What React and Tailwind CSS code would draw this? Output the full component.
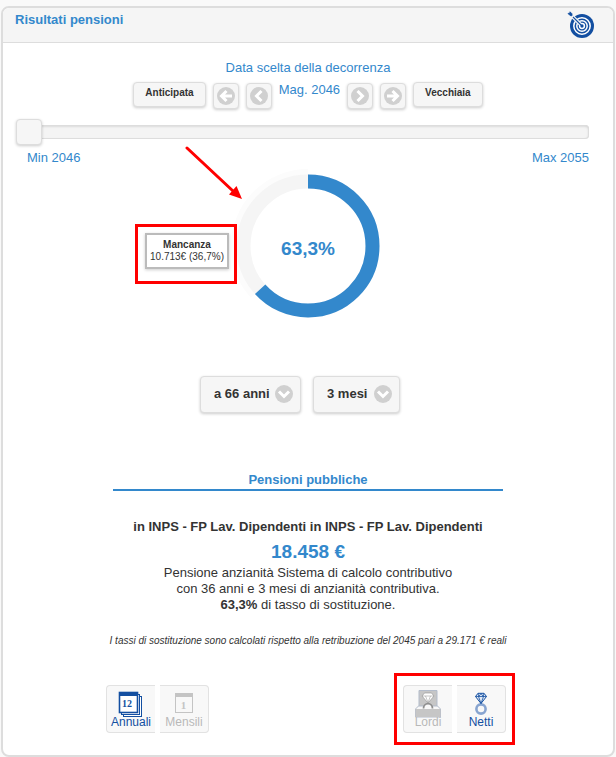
import { useState } from 'react';

const ArrowGlyph = ({ path }) => (
  <svg viewBox="0 0 18 18" className="size-[18px]" aria-hidden="true">
    <circle cx="9" cy="9" r="9" fill="#d0d0d0" />
    <path d={path} fill="none" stroke="#fff" strokeWidth="3" />
  </svg>
);

const TargetIcon = () => (
  <svg viewBox="0 0 28 28" className="size-7" aria-hidden="true">
    <circle cx="15" cy="15" r="12" fill="#134fa1" />
    <g fill="none" stroke="#fff" strokeWidth="1.5">
      <circle cx="15" cy="15" r="8.2" />
      <circle cx="15" cy="15" r="5.2" />
      <circle cx="15" cy="15" r="2.4" />
    </g>
    <path d="M5 5l8 8" stroke="#f5f5f5" strokeWidth="3.6" />
    <path d="M6 6l9 9" stroke="#134fa1" strokeWidth="1.1" />
    <path d="M1 2.500l2-.5V.8l2 2v2L3 4.500z" fill="#134fa1" stroke="#134fa1" strokeWidth=".8" />
  </svg>
);

const YearIcon = () => (
  <svg viewBox="0 0 26 27" className="-mb-0.5 h-[27px] w-[26px]" aria-hidden="true">
    <g fill="#fff" stroke="#134fa1">
      <rect x="5.5" y="5.5" width="18" height="20" />
      <rect x="3.5" y="3.5" width="18" height="20" />
      <rect x="1.5" y="1.5" width="18" height="20" strokeWidth="1.6" />
    </g>
    <path d="M1 1h19v4H1z" fill="#134fa1" />
    <text x="9" y="16" textAnchor="middle" fontSize="10" fontFamily="Liberation Serif, serif" fontWeight="bold" fill="#134fa1">12</text>
  </svg>
);

const MonthIcon = () => (
  <svg viewBox="0 0 20 22" className="mb-0.5 h-[22px] w-5" aria-hidden="true">
    <rect x="1.5" y="1.5" width="17" height="19" fill="#f8f8f8" stroke="#c4c4c4" />
    <path d="M1 1h18v4H1z" fill="#c4c4c4" />
    <text x="9.5" y="17" textAnchor="middle" fontSize="11" fontFamily="Liberation Serif, serif" fontWeight="bold" fill="#c4c4c4">1</text>
  </svg>
);

const RingBoxIcon = () => (
  <svg viewBox="0 0 26 28" className="-mb-0.5 h-7 w-[26px]" aria-hidden="true">
    <path d="M4 .5h18V18H4z" fill="#c6c6c6" stroke="#b3bccb" />
    <path d="M.5 27V19l3-3h19l3 3v8z" fill="#f8f8f8" stroke="#b3bccb" />
    <path d="M.5 19h25v8H.5z" fill="#c6c6c6" />
    <path d="M8.500 18.500a4.500 4.800 0 0 1 9 0" fill="#f8f8f8" stroke="#8f8f8f" strokeWidth="1.800" />
    <path d="M9.500 3h7L19 6l-6 7-6-7z" fill="#fff" stroke="#8f8f8f" strokeWidth=".6" />
    <path d="M7 6h12M10.500 6l2.500 6.500L15.500 6" fill="none" stroke="#9d9d9d" strokeWidth=".6" />
  </svg>
);

const RingIcon = () => (
  <svg viewBox="0 0 14 24" className="h-6 w-3.5" aria-hidden="true">
    <circle cx="7" cy="17" r="4.6" fill="none" stroke="#87a4d0" strokeWidth="2.6" />
    <path d="M4 1.300h6L12.500 4.500 7 11.500 1.500 4.500z" fill="#dfe8f5" stroke="#134fa1" strokeWidth="1" />
    <path d="M1.500 4.500h11M4.500 4.500L7 11.500l2.500-7M4 1.500l.8 3L7 1.500l2.200 3 .8-3" fill="none" stroke="#134fa1" strokeWidth=".8" />
  </svg>
);

const buttonStyle = 'rounded border border-[#ddd] bg-[#f6f6f6] shadow-[0_1px_3px_rgba(0,0,0,0.2)]';

const TextButton = ({ children, onClick }) => (
  <button onClick={onClick} className={`${buttonStyle} h-[25px] px-[11px] pb-1 text-[10px] leading-4 font-bold`}>
    {children}
  </button>
);

const IconButton = ({ label, path, onClick }) => (
  <button
    aria-label={label}
    onClick={onClick}
    className={`${buttonStyle} mt-px flex size-[26px] items-center justify-center`}
  >
    <ArrowGlyph path={path} />
  </button>
);

const SelectBox = ({ label, options, width }) => (
  <div className={`relative ${width}`}>
    <select
      aria-label={label}
      className={`${buttonStyle} h-[37px] w-full appearance-none pb-0.5 pl-[13px] text-[13px] font-bold`}
    >
      {options.map((option) => (
        <option key={option}>{option}</option>
      ))}
    </select>
    <span className="pointer-events-none absolute top-[9px] right-2">
      <ArrowGlyph path="M4 6.500l5 5 5-5" />
    </span>
  </div>
);

const ToggleButton = ({ icon, label, active, side, onClick }) => (
  <button
    aria-pressed={active}
    onClick={onClick}
    className={`flex h-12 w-[49px] flex-col items-center justify-end border border-[#e2e2e2] bg-[#f8f8f8] pb-[3px] text-xs leading-[13px] ${side} ${active ? 'text-[#134fa1]' : 'text-[#b8b8b8]'}`}
  >
    {icon}
    <span className="relative">{label}</span>
  </button>
);

const Chart = () => (
  <div className="relative mx-auto size-[160px]">
    <svg viewBox="0 0 160 160" className="size-full" aria-hidden="true">
      <g fill="none" transform="rotate(-90 80 80)">
        <circle cx="80" cy="80" r="74" stroke="#fcfcfc" strokeWidth="6" pathLength="100" strokeDasharray="0 63.3 36.7 0" />
        <circle cx="80" cy="80" r="64.500" stroke="#f5f5f5" strokeWidth="14" />
        <circle cx="80" cy="80" r="64.500" stroke="#3388cc" strokeWidth="14" pathLength="100" strokeDasharray="63.3 36.7" />
      </g>
    </svg>
    <span className="absolute inset-0 flex items-center justify-center pt-1.5 text-[19px] font-bold text-[#3388cc]">
      63,3%
    </span>
    <svg viewBox="0 0 60 56" className="absolute -top-5 -left-11 h-14 w-[60px]" aria-hidden="true">
      <path d="M3 2l46 43" stroke="#f00" strokeWidth="3" strokeLinecap="round" />
      <path d="M58 53l-13-4.500 7.500-8.500z" fill="#f00" />
    </svg>
    <div className="absolute top-[58px] -left-[93px] border-[3px] border-[#f00] pt-1.5 pr-[5px] pb-3 pl-[7px]">
      <div className="w-[84px] border-2 border-[#bbb] bg-white py-1 text-center text-[10px] leading-3 whitespace-nowrap shadow-[0_1px_3px_rgba(0,0,0,0.2)]">
        <b className="block">Mancanza</b>
        10.713€ (36,7%)
      </div>
    </div>
  </div>
);

const App = () => {
  const [year, setYear] = useState(2046);
  const [period, setPeriod] = useState('Annuali');
  const [amount, setAmount] = useState('Netti');

  return (
    <main className="min-h-screen bg-[#f9f9f9] px-px pt-1.5 font-['Liberation_Sans',Arial,sans-serif] text-[13px] leading-4 text-[#333]">
      <section className="rounded-lg border-2 border-[#ddd] bg-white">
        <header className="flex h-[35px] items-start justify-between rounded-t-md border-b border-[#ddd] bg-[#f5f5f5] pr-[18px] pl-3">
          <h1 className="pt-1 font-bold text-[#3388cc]">Risultati pensioni</h1>
          <div className="pt-[3px]">
            <TargetIcon />
          </div>
        </header>

        <div className="pt-[17px] text-center text-[#3388cc]">
          <p>Data scelta della decorrenza</p>
          <div className="mt-1.5 flex items-start justify-center gap-[7px] text-[#333]">
            <TextButton onClick={() => setYear(2046)}>Anticipata</TextButton>
            <IconButton label="Anno precedente" path="M15 9H5M9.500 4L4.500 9l5 5" onClick={() => setYear(Math.max(2046, year - 1))} />
            <IconButton label="Mese precedente" path="M11.500 4l-5 5 5 5" />
            <span className="text-[#3388cc]">Mag. {year}</span>
            <IconButton label="Mese successivo" path="M6.500 4l5 5-5 5" />
            <IconButton label="Anno successivo" path="M3 9h10M8.500 4l5 5-5 5" onClick={() => setYear(Math.min(2055, year + 1))} />
            <TextButton onClick={() => setYear(2055)}>Vecchiaia</TextButton>
          </div>
        </div>

        <div className="mt-2.5 pr-6 pl-[13px]">
          <input
            type="range"
            aria-label="Anno di decorrenza"
            min="2046"
            max="2055"
            value={year}
            onChange={(e) => setYear(Number(e.target.value))}
            className="block h-[26px] w-full appearance-none bg-transparent [&::-webkit-slider-runnable-track]:h-3.5 [&::-webkit-slider-runnable-track]:rounded [&::-webkit-slider-runnable-track]:bg-[#f4f4f4] [&::-webkit-slider-runnable-track]:shadow-[inset_0_0_0_1px_#ddd,inset_0_1px_3px_rgba(0,0,0,0.2)] [&::-webkit-slider-thumb]:-mt-1.5 [&::-webkit-slider-thumb]:size-[26px] [&::-webkit-slider-thumb]:appearance-none [&::-webkit-slider-thumb]:rounded [&::-webkit-slider-thumb]:border [&::-webkit-slider-thumb]:border-[#ddd] [&::-webkit-slider-thumb]:bg-[#f6f6f6] [&::-webkit-slider-thumb]:shadow-[0_1px_3px_rgba(0,0,0,0.2)]"
          />
          <div className="mt-[5px] flex justify-between pl-[11px] text-[#3388cc]">
            <span>Min 2046</span>
            <span>Max 2055</span>
          </div>
        </div>

        <Chart />

        <div className="mt-[50px] flex justify-center gap-3 pr-4">
          <SelectBox label="Anni" options={['a 66 anni', 'a 67 anni', 'a 68 anni']} width="w-[101px]" />
          <SelectBox label="Mesi" options={['3 mesi', '4 mesi', '5 mesi']} width="w-[87px]" />
        </div>

        <div className="mt-[59px] text-center">
          <h2 className="mx-auto w-[64%] border-b-2 border-[#3388cc] pb-px font-bold text-[#3388cc]">
            Pensioni pubbliche
          </h2>
          <h3 className="mt-7 font-bold">in INPS - FP Lav. Dipendenti in INPS - FP Lav. Dipendenti</h3>
          <p className="mt-1 text-[19px] leading-[26px] font-bold text-[#3388cc]">18.458 €</p>
          <p>Pensione anzianità Sistema di calcolo contributivo</p>
          <p>con 36 anni e 3 mesi di anzianità contributiva.</p>
          <p>
            <b>63,3%</b> di tasso di sostituzione.
          </p>
          <p className="mt-5 text-[10px] italic">
            I tassi di sostituzione sono calcolati rispetto alla retribuzione del 2045 pari a 29.171 € reali
          </p>
        </div>

        <div className="mt-6 flex items-center justify-between pr-[98px] pb-2.5 pl-[103px]">
          <div className="flex gap-[5px]">
            <ToggleButton icon={<YearIcon />} label="Annuali" side="rounded-l border-r-0" active={period === 'Annuali'} onClick={() => setPeriod('Annuali')} />
            <ToggleButton icon={<MonthIcon />} label="Mensili" side="rounded-r border-l-0" active={period === 'Mensili'} onClick={() => setPeriod('Mensili')} />
          </div>
          <div className="flex gap-[5px] border-[3px] border-[#f00] px-[6px] py-[9px]">
            <ToggleButton icon={<RingBoxIcon />} label="Lordi" side="rounded-l border-r-0" active={amount === 'Lordi'} onClick={() => setAmount('Lordi')} />
            <ToggleButton icon={<RingIcon />} label="Netti" side="rounded-r border-l-0" active={amount === 'Netti'} onClick={() => setAmount('Netti')} />
          </div>
        </div>
      </section>
    </main>
  );
};

export default App;
